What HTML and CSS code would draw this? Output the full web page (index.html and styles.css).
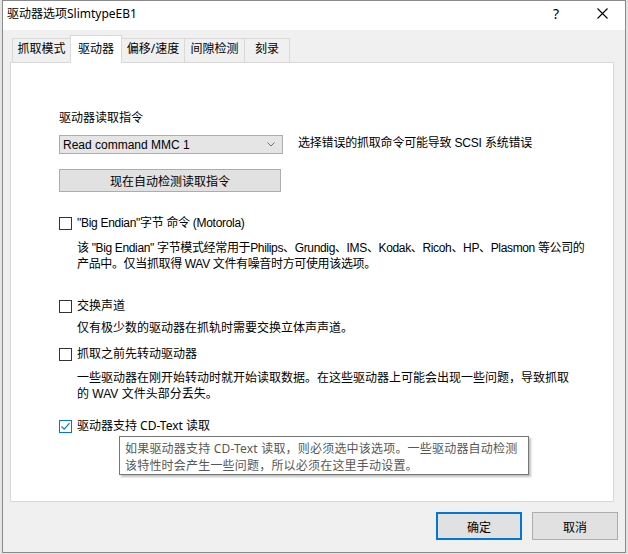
FILE: index.html
```html
<!DOCTYPE html>
<html lang="zh-CN">
<head>
  <meta charset="UTF-8">
  <title>驱动器选项</title>
  <link rel="stylesheet" href="styles.css">
</head>
<body>
  <div class="window">
    <div class="titlebar">
      <span class="title">驱动器选项SlimtypeEB1</span>
      <div class="caption-btns">
        <span class="cap-btn help">?</span>
        <span class="cap-btn close">
          <svg width="11" height="11" viewBox="0 0 11 11"><path d="M0.5 0.5L10.5 10.5M10.5 0.5L0.5 10.5" stroke="#000" stroke-width="1.1" fill="none"/></svg>
        </span>
      </div>
    </div>

    <div class="client">
      <div class="tabs">
        <div class="tab t1">抓取模式</div>
        <div class="tab t2 active">驱动器</div>
        <div class="tab t3">偏移/速度</div>
        <div class="tab t4">间隙检测</div>
        <div class="tab t5">刻录</div>
      </div>

      <div class="panel">
        <div class="line">驱动器读取指令</div>
        <div class="combo-row">
          <div class="combo">
            <span>Read command MMC 1</span>
            <svg width="8" height="5" viewBox="0 0 8 5"><path d="M0.5 0.5L4 4L7.5 0.5" stroke="#707070" stroke-width="1" fill="none"/></svg>
          </div>
          <span class="combo-note">选择错误的抓取命令可能导致 SCSI 系统错误</span>
        </div>
        <button class="detect-btn">现在自动检测读取指令</button>

        <div class="option o1"><span class="check"></span>"Big Endian"字节 命令 (Motorola)</div>
        <div class="desc d1">该 "Big Endian" 字节模式经常用于Philips、Grundig、IMS、Kodak、Ricoh、HP、Plasmon 等公司的<br>产品中。仅当抓取得 WAV 文件有噪音时方可使用该选项。</div>

        <div class="option o2"><span class="check"></span>交换声道</div>
        <div class="desc d2">仅有极少数的驱动器在抓轨时需要交换立体声声道。</div>

        <div class="option o3"><span class="check"></span>抓取之前先转动驱动器</div>
        <div class="desc d3">一些驱动器在刚开始转动时就开始读取数据。在这些驱动器上可能会出现一些问题，导致抓取<br>的 WAV 文件头部分丢失。</div>

        <div class="option o4">
          <span class="check checked">
            <svg width="11" height="11" viewBox="0 0 11 11"><path d="M1.5 5.5L4.2 8.2L9.5 2.2" stroke="#0078d7" stroke-width="1.2" fill="none"/></svg>
          </span>驱动器支持 CD-Text 读取
          <div class="tooltip">如果驱动器支持 CD-Text 读取，则必须选中该选项。一些驱动器自动检测<br>该特性时会产生一些问题，所以必须在这里手动设置。</div>
        </div>
      </div>

      <div class="footer">
        <button class="btn default">确定</button>
        <button class="btn">取消</button>
      </div>
    </div>
  </div>
</body>
</html>
```

FILE: styles.css
```css
* {margin: 0; padding: 0; box-sizing: border-box;}
body {background-color: #e4e4e4; font-family: "Liberation Sans", "Noto Sans CJK SC", sans-serif; font-size: 12px; color: #000; width: 628px; height: 554px; overflow: hidden;}

.window {margin-left: 2px; width: 624px; height: 553px; border: 1px solid #8a8a8a; background-color: #f0f0f0; display: flex; flex-direction: column;}

.titlebar {height: 29px; background-color: #fff; display: flex; align-items: center; justify-content: space-between; padding: 0 0 4px 4px;}
.title {font-family: "Noto Sans", "Noto Sans CJK SC", sans-serif; font-size: 12px; line-height: 16px;}
.caption-btns {display: flex; height: 100%;}
.cap-btn {width: 46px; display: flex; align-items: center; justify-content: center;}
.help {font-family: "Noto Sans", sans-serif; font-size: 14px;}

.client {flex: 1; display: flex; flex-direction: column;}

.tabs {display: flex; align-items: flex-end; height: 32px; padding-left: 9px;}
.tab {height: 24px; border: 1px solid #d9d9d9; border-bottom: none; margin-right: -1px; background-color: #f0f0f0; font-family: "Noto Sans", "Noto Sans CJK SC", sans-serif; font-size: 12px; display: flex; align-items: center; justify-content: center; padding-bottom: 5px;}
.tab.active {height: 28px; background-color: #fff; margin-bottom: -1px; position: relative; z-index: 1; padding-bottom: 3px;}
.t1 {width: 59px;}
.t2 {width: 52px;}
.t3 {width: 64px;}
.t4 {width: 61px;}
.t5 {width: 46px;}

.panel {margin: 0 11px 0 7px; height: 440px; border: 1px solid #d9d9d9; background-color: #fff; padding: 47px 0 0 48px; display: flex; flex-direction: column; align-items: flex-start;}
.line {line-height: 16px;}

.combo-row {margin-top: 9px; display: flex; align-items: center; gap: 15px;}
.combo {width: 224px; height: 19px; border: 1px solid #adadad; background-color: #e5e5e5; display: flex; align-items: center; justify-content: space-between; padding: 0 7px 0 3px;}
.combo-note {line-height: 16px; margin-top: -3px; letter-spacing: -0.2px;}

.detect-btn {margin-top: 15px; width: 222px; height: 23px; border: 1px solid #adadad; background-color: #e1e1e1; font-family: "Noto Sans CJK SC", sans-serif; font-size: 12px;}

.option {display: flex; align-items: center; line-height: 16px; position: relative;}
.check {width: 13px; height: 13px; border: 1px solid #333; background-color: #fff; margin-right: 5px; display: flex; align-items: center; justify-content: center;}
.check.checked {border-color: #0078d7;}
.desc {line-height: 16px; padding-left: 18px; white-space: nowrap;}

.o1 {margin-top: 23px; letter-spacing: -0.3px;}
.d1 {margin-top: 9px; letter-spacing: -0.35px;}
.o2 {margin-top: 26px;}
.d2 {margin-top: 6px;}
.o3 {margin-top: 10px;}
.d3 {margin-top: 8px;}
.o4 {margin-top: 16px; font-family: "Noto Sans", "Noto Sans CJK SC", sans-serif;}

.tooltip {position: absolute; left: 60px; top: 18px; width: 410px; height: 39px; border: 1px solid #767676; background-color: #fff; color: #575757; padding: 3px 0 0 5px; line-height: 17px; white-space: nowrap; letter-spacing: 0.2px; box-shadow: 2px 2px 2px rgba(0,0,0,0.25); z-index: 5;}

.footer {display: flex; justify-content: flex-end; gap: 10px; padding: 10px 7px 0 0;}
.btn {width: 86px; height: 28px; border: 1px solid #adadad; background-color: #e1e1e1; font-family: "Noto Sans CJK SC", sans-serif; font-size: 12px; color: #000;}
.btn.default {border: 2px solid #0078d7;}
```
